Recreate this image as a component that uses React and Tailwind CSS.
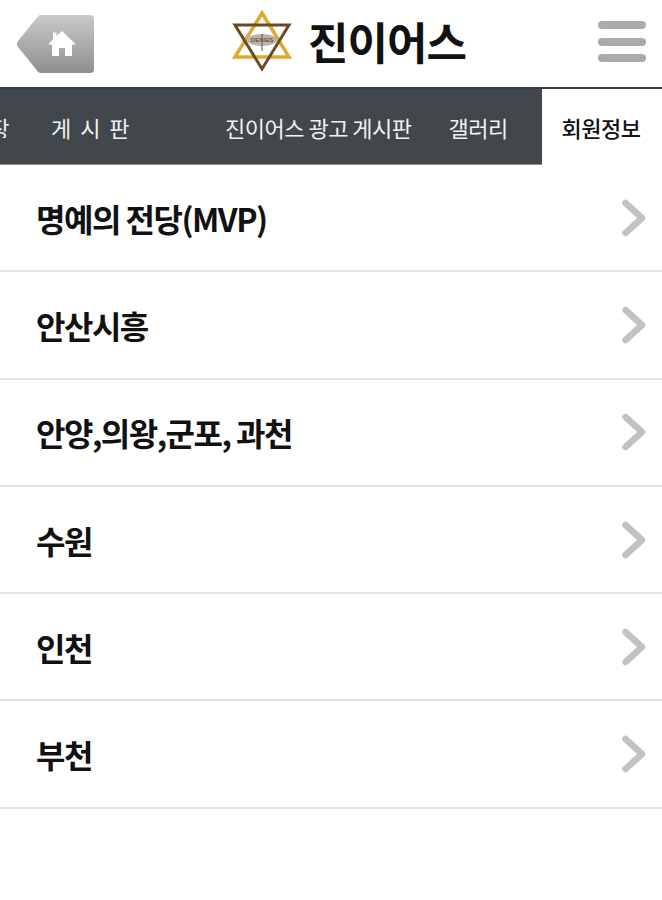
const font = { fontFamily: '"Noto Sans CJK KR", "Liberation Sans", sans-serif' };

const rows = ['명예의 전당(MVP)', '안산시흥', '안양,의왕,군포, 과천', '수원', '인천', '부천'];

function HomeButton() {
  return (
    <svg width="80" height="60" viewBox="0 0 80 60" className="ml-[16px] shrink-0">
      <defs>
        <linearGradient id="homeBg" x1="0" y1="0" x2="0" y2="1">
          <stop offset="0" stopColor="#c9c9c9" />
          <stop offset="1" stopColor="#8f8f8f" />
        </linearGradient>
      </defs>
      <path d="M25 1H74a4 4 0 0 1 4 4V55a4 4 0 0 1-4 4H25a4 4 0 0 1-3-1.3L2 33a5 5 0 0 1 0-6L22 2.3A4 4 0 0 1 25 1Z" fill="url(#homeBg)" />
      <path d="M46 17L60 30.500H56V42H49V34H43V42H36V30.500H32L37 25.500V18.500H40.500V22Z" fill="#fff" />
    </svg>
  );
}

function Logo() {
  return (
    <svg width="64" height="62" viewBox="0 0 64 62" className="shrink-0">
      <path d="M32 3L59 47H5Z" fill="none" stroke="#dfa92c" strokeWidth="3.500" />
      <path d="M32 59L5 15H59Z" fill="none" stroke="#6b4a24" strokeWidth="3" />
      <ellipse cx="32" cy="30" rx="15" ry="6" fill="#b9b3a8" />
      <text x="32" y="32" textAnchor="middle" fontSize="6" fill="#4a3a28" style={{ fontFamily: '"Liberation Sans", sans-serif' }}>DENIES</text>
      <path d="M32 24V41" stroke="#6b4a24" strokeWidth="1" />
    </svg>
  );
}

function MenuIcon() {
  return (
    <div className="w-[48px] flex flex-col gap-[8.500px]">
      <div className="h-[8px] rounded-full bg-[#ababab]" />
      <div className="h-[8px] rounded-full bg-[#ababab]" />
      <div className="h-[8px] rounded-full bg-[#ababab]" />
    </div>
  );
}

function Chevron() {
  return (
    <svg width="26" height="38" viewBox="0 0 26 38" className="shrink-0">
      <path d="M4.500 4L21 19L4.500 34" fill="none" stroke="#c2c2c2" strokeWidth="6.500" strokeLinecap="round" strokeLinejoin="round" />
    </svg>
  );
}

export default function App() {
  return (
    <div className="w-[662px] h-[900px] bg-white overflow-hidden" style={font}>
      {/* Header */}
      <div className="h-[87px] flex items-center">
        <HomeButton />
        <div className="flex items-center ml-[134px] gap-[14px] mt-[-6px]">
          <Logo />
          <span className="text-[44px] leading-none font-bold text-[#111] tracking-[-1px]">진이어스</span>
        </div>
        <div className="ml-auto mr-[16px] mt-[-4px]">
          <MenuIcon />
        </div>
      </div>

      {/* Tabs */}
      <div className="h-[78px] flex border-t-[2px] border-t-[#3a3d40] text-[22px] leading-none tracking-[-0.5px]">
        <div className="flex-1 flex items-center bg-[#42474c] text-[#f2f2f2] border-b border-b-[#8d9194]">
          <div className="w-[9px] overflow-hidden flex justify-end shrink-0">
            <span className="whitespace-nowrap">광장</span>
          </div>
          <span className="ml-[42px] w-[74px] whitespace-nowrap tracking-[2px]">게 시 판</span>
          <span className="ml-[100px] whitespace-nowrap">진이어스 광고 게시판</span>
          <span className="ml-[37px] whitespace-nowrap">갤러리</span>
        </div>
        <div className="w-[120px] flex items-center justify-center text-[#111] bg-white font-medium pr-[2px]">회원정보</div>
      </div>

      {/* List */}
      <div className="flex flex-col">
        {rows.map(label => (
          <div key={label} className="h-[107.300px] flex items-center justify-between pl-[36px] pr-[15px] border-b-[2px] border-b-[#e2e2e2]">
            <span className="text-[32px] leading-none font-bold text-[#111] tracking-[-1.500px]">{label}</span>
            <Chevron />
          </div>
        ))}
      </div>
    </div>
  );
}
